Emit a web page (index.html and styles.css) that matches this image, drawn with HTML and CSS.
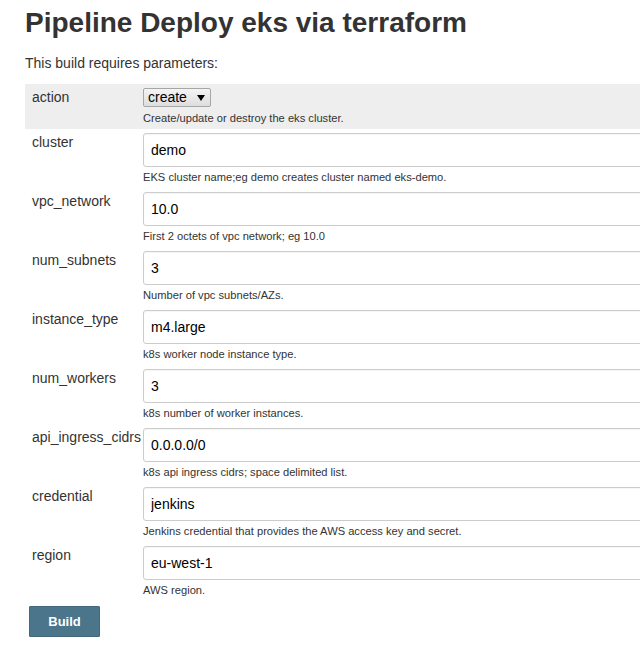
FILE: index.html
```html
<!DOCTYPE html>
<html>
<head>
<meta charset="utf-8">
<title>Pipeline Deploy eks via terraform</title>
<link rel="stylesheet" href="styles.css">
</head>
<body>
<div class="main">
  <h1 class="title">Pipeline Deploy eks via terraform</h1>
  <p class="intro">This build requires parameters:</p>
  <form class="params">
    <div class="row row-shaded">
      <div class="label">action</div>
      <div class="field">
        <span class="select-wrap">
          <select class="select"><option>create</option><option>destroy</option></select>
          <svg class="select-arrow" width="8" height="6" viewBox="0 0 8 6"><path d="M0 0H8L4 6Z" fill="#000"/></svg>
        </span>
        <div class="desc">Create/update or destroy the eks cluster.</div>
      </div>
    </div>
    <div class="row">
      <div class="label">cluster</div>
      <div class="field">
        <input class="text" type="text" value="demo">
        <div class="desc">EKS cluster name;eg demo creates cluster named eks-demo.</div>
      </div>
    </div>
    <div class="row">
      <div class="label">vpc_network</div>
      <div class="field">
        <input class="text" type="text" value="10.0">
        <div class="desc">First 2 octets of vpc network; eg 10.0</div>
      </div>
    </div>
    <div class="row">
      <div class="label">num_subnets</div>
      <div class="field">
        <input class="text" type="text" value="3">
        <div class="desc">Number of vpc subnets/AZs.</div>
      </div>
    </div>
    <div class="row">
      <div class="label">instance_type</div>
      <div class="field">
        <input class="text" type="text" value="m4.large">
        <div class="desc">k8s worker node instance type.</div>
      </div>
    </div>
    <div class="row">
      <div class="label">num_workers</div>
      <div class="field">
        <input class="text" type="text" value="3">
        <div class="desc">k8s number of worker instances.</div>
      </div>
    </div>
    <div class="row">
      <div class="label">api_ingress_cidrs</div>
      <div class="field">
        <input class="text" type="text" value="0.0.0.0/0">
        <div class="desc">k8s api ingress cidrs; space delimited list.</div>
      </div>
    </div>
    <div class="row">
      <div class="label">credential</div>
      <div class="field">
        <input class="text" type="text" value="jenkins">
        <div class="desc">Jenkins credential that provides the AWS access key and secret.</div>
      </div>
    </div>
    <div class="row">
      <div class="label">region</div>
      <div class="field">
        <input class="text" type="text" value="eu-west-1">
        <div class="desc">AWS region.</div>
      </div>
    </div>
    <div class="actions">
      <button class="build" type="button">Build</button>
    </div>
  </form>
</div>
</body>
</html>
```
FILE: styles.css
```css
html, body {
  margin: 0;
  padding: 0;
  background: #fff;
  overflow: hidden;
}
body {
  font-family: "Liberation Sans", Arial, Helvetica, sans-serif;
  color: #333;
  font-size: 14px;
}
.main {
  padding-left: 25px;
}
.title {
  margin: 7px 0 0 0;
  font-size: 28px;
  line-height: 32px;
  font-weight: bold;
  color: #333;
}
.intro {
  margin: 14px 0 0 0;
  font-size: 14px;
  line-height: 20px;
}
.params {
  margin-top: 11px;
  width: 900px;
}
.row {
  display: grid;
  grid-template-columns: 118px 1fr;
}
.row-shaded {
  background: #eee;
}
.label {
  padding: 4px 0 0 7px;
  line-height: 18px;
  white-space: nowrap;
}
.field {
  padding: 4px 0 4px 0;
  display: flex;
  flex-direction: column;
  align-items: flex-start;
}
.desc {
  font-size: 11.15px;
  line-height: 14px;
  margin-top: 3px;
  color: #333;
}
.row-shaded .desc {
  margin-top: 4px;
}
.select-wrap {
  position: relative;
  display: inline-block;
}
.select {
  -webkit-appearance: none;
  appearance: none;
  font-family: "Liberation Sans", Arial, sans-serif;
  font-size: 14px;
  color: #000;
  height: 19px;
  width: 68px;
  padding: 0 0 0 4px;
  margin: 0;
  border: 1px solid #a6a6a6;
  border-radius: 2px;
  background: linear-gradient(#f4f4f4, #dedede);
  line-height: 17px;
}
.select-arrow {
  position: absolute;
  right: 6px;
  top: 7px;
  pointer-events: none;
}
.text {
  box-sizing: border-box;
  width: 720px;
  height: 34px;
  margin: 0;
  padding: 0 7px;
  font-family: "Liberation Sans", Arial, sans-serif;
  font-size: 14px;
  color: #000;
  border: 1px solid #ccc;
  border-radius: 3px;
  background: #fff;
  box-shadow: inset 0 1px 1px rgba(0,0,0,0.04);
}
.actions {
  padding: 5px 0 0 4px;
}
.build {
  width: 71px;
  height: 31px;
  border: 1px solid #44697d;
  border-radius: 1px;
  background: #4b758b;
  color: #fff;
  font-family: "Liberation Sans", Arial, sans-serif;
  font-size: 13px;
  font-weight: bold;
  padding: 0;
}
```
